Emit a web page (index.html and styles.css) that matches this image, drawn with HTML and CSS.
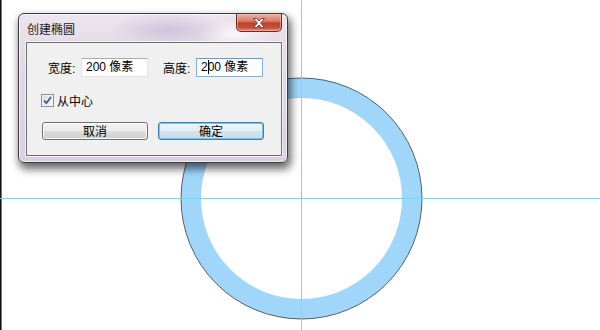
FILE: index.html
```html
<!DOCTYPE html>
<html>

<head>
  <meta charset="UTF-8">
  <title>创建椭圆</title>
  <link rel="stylesheet" href="styles.css">
</head>

<body>
  <div class="canvas">
    <svg class="shape" width="600" height="330" viewBox="0 0 600 330">
      <circle cx="301.5" cy="198.5" r="110.5" fill="none" stroke="#a1d6fb" stroke-width="20" />
      <circle cx="301.5" cy="198.5" r="120.5" fill="none" stroke="#4a4f55" stroke-width="0.9" />
      <line x1="301.5" y1="0" x2="301.5" y2="330" stroke="#55e6f0" stroke-width="1" />
      <line x1="0" y1="198.5" x2="600" y2="198.5" stroke="#55e6f0" stroke-width="1" />
    </svg>

    <div class="dialog">
      <div class="titlebar">
        <span class="title">创建椭圆</span>
        <div class="close">
          <svg width="16" height="12" viewBox="0 0 16 12">
            <path d="M2.5 1.5h3.2l2.3 2.6 2.3-2.6h3.2l-3.9 4.5 3.9 4.5h-3.2l-2.3-2.6-2.3 2.6h-3.2l3.9-4.5z"
              fill="#fff" stroke="#6b3a34" stroke-width="0.9" stroke-linejoin="round" />
          </svg>
        </div>
      </div>
      <div class="client">
        <div class="size-row">
          <div class="field">
            <span class="label">宽度:</span>
            <span class="input">200 像素</span>
          </div>
          <div class="field">
            <span class="label">高度:</span>
            <span class="input focus">2<i class="caret"></i>00 像素</span>
          </div>
        </div>
        <div class="check-row">
          <span class="checkbox">
            <svg width="9" height="9" viewBox="0 0 9 9">
              <path d="M1 4.6l2.4 2.6L8 1" fill="none" stroke="#3d5a9a" stroke-width="1.8" />
            </svg>
          </span>
          <span class="check-label">从中心</span>
        </div>
        <div class="button-row">
          <div class="btn">取消</div>
          <div class="btn default">确定</div>
        </div>
      </div>
    </div>
  </div>
</body>

</html>
```

FILE: styles.css
```css
* {
  padding: 0;
  margin: 0;
  box-sizing: border-box;
}

body {
  width: 600px;
  height: 330px;
  overflow: hidden;
  background: #fff;
  font-family: "Liberation Sans", "Noto Sans CJK SC", sans-serif;
  font-size: 12px;
  color: #000;
}

.canvas {
  position: relative;
  width: 600px;
  height: 330px;
  border-left: 1px solid #111;
  box-shadow: inset 1px 0 0 #777;
}

.shape {
  position: absolute;
  left: -1px;
  top: 0;
}

/* dialog window */
.dialog {
  position: absolute;
  left: 17px;
  top: 13px;
  width: 270px;
  height: 150px;
  display: flex;
  flex-direction: column;
  padding: 0 5px 6px 7px;
  border: 1px solid #3e3a40;
  border-radius: 6px;
  background:
    radial-gradient(ellipse 60px 18px at 150px 16px, rgba(190, 170, 205, .55), rgba(190, 170, 205, 0)),
    radial-gradient(ellipse 40px 14px at 215px 20px, rgba(255, 255, 255, .7), rgba(255, 255, 255, 0)),
    linear-gradient(180deg, #ece5ef 0, #e3d9e7 30%, #dbcfe0 100%);
  box-shadow: inset 0 0 0 1px rgba(255, 255, 255, .6), 2px 5px 9px 1px rgba(0, 0, 0, .6);
}

.titlebar {
  height: 28px;
  display: flex;
  justify-content: space-between;
}

.title {
  align-self: center;
  margin-left: 1px;
  font-family: "Noto Sans CJK SC", sans-serif;
  font-size: 12px;
  color: #1c1c1c;
}

.close {
  width: 46px;
  height: 18px;
  display: flex;
  justify-content: center;
  align-items: center;
  border: 1px solid #6d2a20;
  border-top: none;
  border-radius: 0 0 5px 5px;
  background: linear-gradient(180deg, #eab0a2 0, #d8806c 40%, #c0402a 55%, #c8503a 80%, #e0907c 100%);
  box-shadow: inset 0 0 0 1px rgba(255, 200, 190, .5);
}

.client {
  flex: 1;
  display: flex;
  flex-direction: column;
  border: 1px solid #6f6f6f;
  background: #f0f0f0;
  box-shadow: 0 0 0 1px rgba(255, 255, 255, .7);
}

.size-row {
  display: flex;
  gap: 15px;
  margin: 15px 0 0 21px;
}

.field {
  display: flex;
  align-items: center;
  gap: 3px;
}

.label {
  width: 30px;
}

.input {
  position: relative;
  width: 67px;
  height: 19px;
  line-height: 17px;
  padding-left: 4px;
  background: #fff;
  border: 1px solid #e2e3ea;
  border-top-color: #abadb3;
}

.input.focus {
  border-color: #7eb4ea;
  border-top-color: #569de5;
}

.caret {
  display: inline-block;
  width: 1px;
  height: 14px;
  margin: 0 -1px 0 0;
  background: #000;
  vertical-align: -3px;
}

.check-row {
  display: flex;
  align-items: center;
  gap: 3px;
  margin: 17px 0 0 14px;
  height: 13px;
}

.check-label {
  font-family: "Noto Sans CJK SC", sans-serif;
}

.checkbox {
  width: 13px;
  height: 13px;
  display: flex;
  justify-content: center;
  align-items: center;
  border: 1px solid #8e8f8f;
  background: linear-gradient(135deg, #dcdcdc, #f8f8f8);
  box-shadow: inset 0 0 0 1px #f4f4f4;
}

.button-row {
  display: flex;
  gap: 10px;
  margin: 15px 0 0 15px;
}

.btn {
  width: 106px;
  height: 18px;
  line-height: 16px;
  text-align: center;
  font-family: "Noto Sans CJK SC", sans-serif;
  border: 1px solid #707070;
  border-radius: 3px;
  background: linear-gradient(180deg, #f3f3f3 0, #ebebeb 48%, #dddddd 52%, #cfcfcf 100%);
  box-shadow: inset 0 0 0 1px rgba(255, 255, 255, .8);
}

.btn.default {
  border-color: #3c7fb1;
  background: linear-gradient(180deg, #eef5fa 0, #e4eef6 48%, #d4e4ef 52%, #c6dae8 100%);
  box-shadow: inset 0 0 0 1px #71c8ec;
}
```
